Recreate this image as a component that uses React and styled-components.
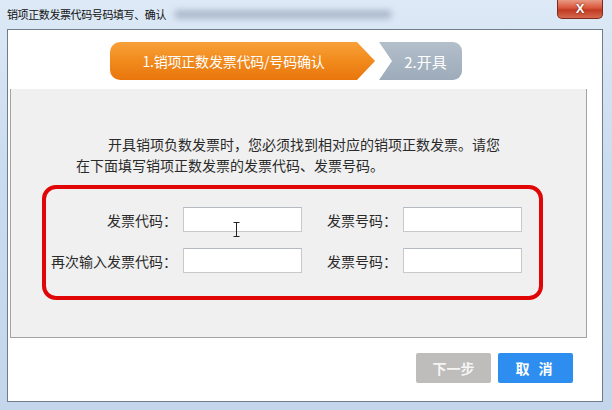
import styled, { createGlobalStyle } from "styled-components";

const GlobalStyle = createGlobalStyle`
  html, body {
    margin: 0;
    padding: 0;
    background: #ffffff;
  }
  body {
    font-family: "Noto Sans CJK SC", "Noto Sans", "Liberation Sans", sans-serif;
  }
`;

const Window = styled.div`
  width: 612px;
  height: 410px;
  box-sizing: border-box;
  padding: 0 9px 8px 7px;
  display: flex;
  flex-direction: column;
  background: linear-gradient(180deg, #dde9f6 0%, #cadcef 40%, #c3d6eb 100%);
`;

const TitleBar = styled.div`
  height: 29px;
  display: flex;
  align-items: flex-start;
`;

const Title = styled.span`
  margin-top: 6px;
  font-size: 11px;
  line-height: 17px;
  letter-spacing: -0.4px;
  color: #111;
`;

const Smudge = styled.span`
  width: 218px;
  height: 9px;
  margin: 10px 0 0 8px;
  border-radius: 5px;
  background: #a3b2c4;
  filter: blur(3px);
  opacity: 0.85;
`;

const CloseButton = styled.button`
  margin-left: auto;
  width: 46px;
  height: 19px;
  padding: 0;
  border: 1px solid #7e2a1c;
  border-top: none;
  border-radius: 0 0 5px 5px;
  background: linear-gradient(180deg, #e99a84 0%, #d8553a 45%, #c13a22 55%, #d4694f 100%);
  color: #fff;
  font-family: "Liberation Sans", sans-serif;
  font-weight: bold;
  font-size: 13px;
  line-height: 18px;
  text-shadow: 0 0 2px #6b1a0c;
`;

const Client = styled.div`
  flex: 1;
  display: flex;
  flex-direction: column;
  background: #ffffff;
  border: 1px solid #6f7c8b;
`;

const StepRow = styled.div`
  display: flex;
  padding: 12px 0 9px 102px;
`;

const StepActive = styled.div`
  position: relative;
  width: 247px;
  height: 38px;
  margin-right: 18px;
  display: flex;
  align-items: center;
  justify-content: center;
  border-radius: 10px 0 0 10px;
  background: linear-gradient(180deg, #f8a13a 0%, #f18a1c 50%, #e9760d 100%);
  color: #ffffff;
  font-size: 14px;
  letter-spacing: -0.2px;

  &::after {
    content: "";
    position: absolute;
    top: 0;
    right: -18px;
    width: 18px;
    height: 100%;
    background: linear-gradient(180deg, #f8a13a 0%, #f18a1c 50%, #e9760d 100%);
    clip-path: polygon(0 0, 100% 50%, 0 100%);
  }
`;

const StepNext = styled.div`
  position: relative;
  width: 83px;
  height: 38px;
  margin-left: 4px;
  box-sizing: border-box;
  padding-left: 10px;
  display: flex;
  align-items: center;
  justify-content: center;
  overflow: hidden;
  border-radius: 0 9px 9px 0;
  background: linear-gradient(180deg, #b3bfcb 0%, #a5b2c0 60%, #9eabba 100%);
  color: #ffffff;
  font-size: 15px;

  &::before {
    content: "";
    position: absolute;
    left: 0;
    top: 0;
    width: 0;
    height: 0;
    border-top: 19px solid transparent;
    border-bottom: 19px solid transparent;
    border-left: 13px solid #ffffff;
  }
`;

const Panel = styled.div`
  height: 249px;
  box-sizing: border-box;
  margin: 0 15px 0 2px;
  padding-top: 45px;
  background: #f0f0f0;
  border: 1px solid #a3a3a3;
  border-top: none;
`;

const Notice = styled.p`
  margin: 0 0 0 81px;
  font-size: 14px;
  line-height: 21px;
  color: #2a2a2a;
  text-indent: 16px;
`;

const SecondLine = styled.span`
  margin-left: -16px;
`;

const RedBox = styled.div`
  position: relative;
  width: 501px;
  height: 115px;
  box-sizing: border-box;
  margin: 9px 0 0 31px;
  padding-top: 18px;
  border: 4px solid #e10606;
  border-radius: 14px;
  display: grid;
  grid-template-columns: 131px 119px 89px 119px;
  grid-auto-rows: 25px;
  column-gap: 6px;
  row-gap: 16px;
  align-items: center;
`;

const Label = styled.label`
  font-size: 14px;
  color: #2a2a2a;
  text-align: right;
  white-space: nowrap;
`;

const Field = styled.input`
  width: 119px;
  height: 25px;
  box-sizing: border-box;
  margin: 0;
  border: 1px solid #c9c9c9;
  border-top-color: #b5b9c0;
  background: #ffffff;
  outline: none;
`;

const Caret = styled.svg`
  position: absolute;
  left: 187px;
  top: 33px;
`;

const ButtonRow = styled.div`
  display: flex;
  justify-content: flex-end;
  gap: 7px;
  padding: 15px 29px 0 0;
`;

const Button = styled.button`
  width: 75px;
  height: 30px;
  border: none;
  border-radius: 2px;
  background: ${(p) => (p.$primary ? "#2d8ef0" : "#bebdbb")};
  color: ${(p) => (p.$primary ? "#ffffff" : "#f5f5f5")};
  font-family: "Noto Sans CJK SC", sans-serif;
  font-size: 14px;
  font-weight: bold;
  letter-spacing: ${(p) => (p.$primary ? "3px" : "0")};
`;

export default function App() {
  return (
    <>
      <GlobalStyle />
      <Window>
        <TitleBar>
          <Title>销项正数发票代码号码填写、确认</Title>
          <Smudge />
          <CloseButton>X</CloseButton>
        </TitleBar>
        <Client>
          <StepRow>
            <StepActive>1.销项正数发票代码/号码确认</StepActive>
            <StepNext>2.开具</StepNext>
          </StepRow>
          <Panel>
            <Notice>
              开具销项负数发票时，您必须找到相对应的销项正数发票。请您
              <br />
              <SecondLine>在下面填写销项正数发票的发票代码、发票号码。</SecondLine>
            </Notice>
            <RedBox>
              <Label>发票代码：</Label>
              <Field />
              <Label>发票号码：</Label>
              <Field />
              <Label>再次输入发票代码：</Label>
              <Field />
              <Label>发票号码：</Label>
              <Field />
              <Caret width="7" height="15" viewBox="0 0 7 15">
                <path d="M0.5 0.5h6M3.5 0.5v14M0.5 14.5h6" stroke="#222" strokeWidth="1" fill="none" />
              </Caret>
            </RedBox>
          </Panel>
          <ButtonRow>
            <Button>下一步</Button>
            <Button $primary>取 消</Button>
          </ButtonRow>
        </Client>
      </Window>
    </>
  );
}
